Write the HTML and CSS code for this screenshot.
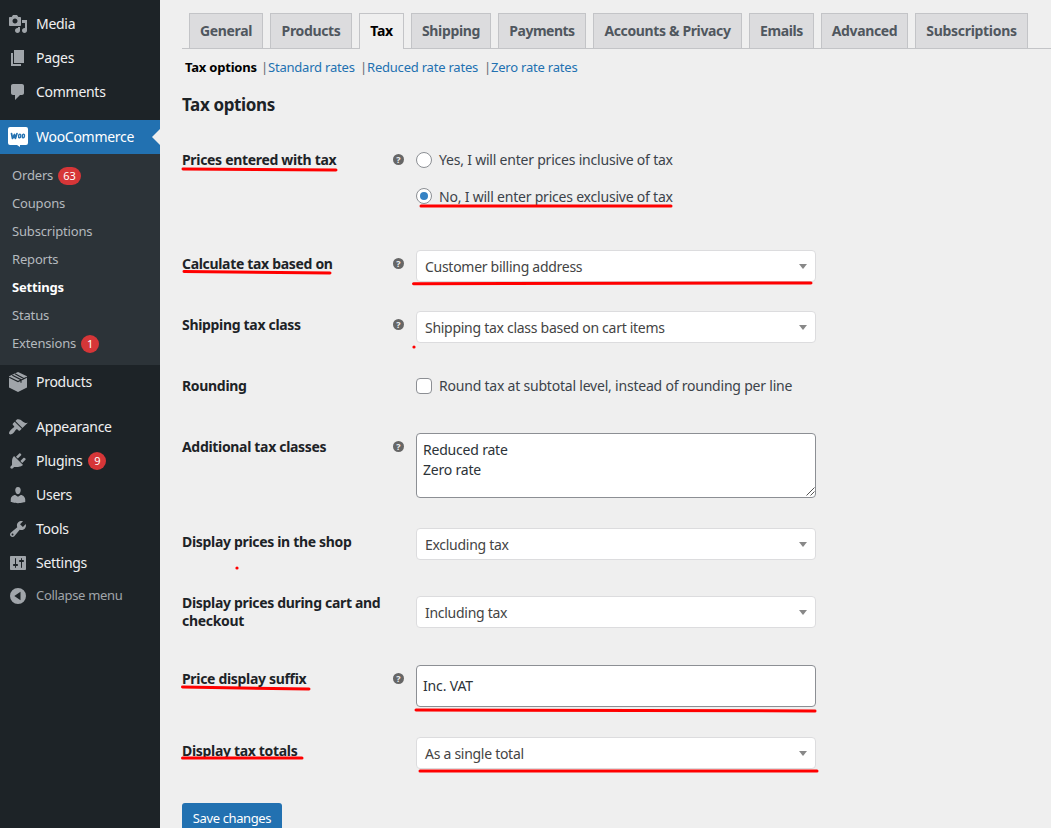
FILE: index.html
```html
<!DOCTYPE html>
<html lang="en">
<head>
<meta charset="utf-8">
<title>WooCommerce settings – Tax</title>
<link rel="stylesheet" href="styles.css">
</head>
<body>
<div class="layout">
<nav class="sidebar">
  <a class="item"><svg class="icon" viewBox="0 0 20 20"><path d="M13 11V4c0-.55-.45-1-1-1h-1.670L9 1H5L3.670 3H2c-.55 0-1 .45-1 1v7c0 .55.45 1 1 1h10c.55 0 1-.45 1-1zM7 4.500c1.380 0 2.500 1.120 2.500 2.500S8.380 9.500 7 9.500 4.500 8.380 4.500 7 5.620 4.500 7 4.500zM14 6h5v10.500c0 1.380-1.120 2.500-2.500 2.500S14 17.880 14 16.500s1.120-2.500 2.500-2.500c.17 0 .34.02.5.05V9h-3V6zm-4 8.050V13h2v3.500c0 1.380-1.120 2.500-2.500 2.500S7 17.880 7 16.500 8.120 14 9.500 14c.17 0 .34.02.5.05z"/></svg><span>Media</span></a>
  <a class="item"><svg class="icon" viewBox="0 0 20 20"><path d="M6 15V2h10v13H6zm-1 1h8v2H3V5h2v11z"/></svg><span>Pages</span></a>
  <a class="item"><svg class="icon" viewBox="0 0 20 20"><path d="M5 2h9c1.100 0 2 .9 2 2v7c0 1.100-.9 2-2 2h-2l-5 5v-5H5c-1.100 0-2-.9-2-2V4c0-1.100.9-2 2-2z"/></svg><span>Comments</span></a>
  <div class="separator"></div>
  <a class="item current"><svg class="icon" viewBox="0 0 20 20"><path fill="#fff" d="M2 0h16q2 0 2 2v14q0 2-2 2h-6v2l-3-2H2q-2 0-2-2V2q0-2 2-2z"/><path fill="none" stroke="#2271b1" stroke-width="1.700" stroke-linejoin="round" stroke-linecap="round" d="M3.500 6.500l1 5 2-4 .9 4L9 6.500"/><ellipse cx="11.700" cy="9" rx="1.100" ry="1.900" fill="none" stroke="#2271b1" stroke-width="1.400" transform="rotate(10 11.700 9)"/><ellipse cx="15.400" cy="9" rx="1.100" ry="1.900" fill="none" stroke="#2271b1" stroke-width="1.400" transform="rotate(10 15.400 9)"/></svg><span>WooCommerce</span></a>
  <div class="submenu">
    <a>Orders<b class="badge">63</b></a>
    <a>Coupons</a>
    <a>Subscriptions</a>
    <a>Reports</a>
    <a class="active">Settings</a>
    <a>Status</a>
    <a>Extensions<b class="badge">1</b></a>
  </div>
  <a class="item"><svg class="icon" viewBox="0 0 20 20"><path d="M10 0l9 4.300v11.200L10 20l-9-4.500V4.300z"/><path fill="none" stroke="#1d2327" stroke-width="1.100" d="M1.200 5.200L10 9.600l8.800-4.400M4.300 3.200l8.700 4.500v3M7 1.800l8.700 4.600"/></svg><span>Products</span></a>
  <div class="separator"></div>
  <a class="item"><svg class="icon" viewBox="0 0 20 20"><path d="M14.480 11.060L7.410 3.990l1.500-1.500c.5-.56 2.300-.47 3.510.32 1.210.8 1.430 1.280 2.910 2.100 1.180.64 2.450 1.260 4.450.85zm-.71.71L6.700 4.700 4.930 6.470c-.39.39-.39 1.020 0 1.410l1.060 1.060c.39.39.39 1.030 0 1.420-.6.6-1.430 1.110-2.210 1.690-.35.26-.7.53-1.010.84C1.430 14.230.4 16.080 1.400 17.070c.99 1 2.840-.03 4.180-1.360.31-.31.58-.66.85-1.020.57-.78 1.080-1.610 1.690-2.210.39-.39 1.020-.39 1.410 0l1.060 1.060c.39.39 1.020.39 1.410 0z"/></svg><span>Appearance</span></a>
  <a class="item"><svg class="icon" viewBox="0 0 20 20"><path d="M13.110 4.360L9.870 7.600 8 5.730l3.240-3.240c.35-.34 1.050-.2 1.560.32.52.51.66 1.210.31 1.550zm-8 1.770l.91-1.120 9.010 9.010-1.190.84c-.71.71-2.630 1.160-3.820 1.160H6.140L4.900 17.260c-.59.59-1.540.59-2.120 0-.59-.58-.59-1.530 0-2.120l1.240-1.240v-3.880c0-1.130.4-3.190 1.090-3.890zm7.260 3.970l3.240-3.240c.34-.35 1.040-.21 1.550.31.52.51.66 1.210.31 1.550l-3.240 3.250z"/></svg><span>Plugins</span><b class="badge">9</b></a>
  <a class="item"><svg class="icon" viewBox="0 0 20 20"><path d="M10 9.250c-2.270 0-2.730-3.440-2.730-3.440C7 4.020 7.820 2 9.970 2c2.160 0 2.980 2.020 2.710 3.810 0 0-.41 3.440-2.680 3.440zm0 2.570L12.720 10c2.390 0 4.520 2.330 4.520 4.530v2.490s-3.650 1.130-7.240 1.130c-3.650 0-7.240-1.130-7.240-1.130v-2.490c0-2.250 1.940-4.480 4.470-4.480z"/></svg><span>Users</span></a>
  <a class="item"><svg class="icon" viewBox="0 0 20 20"><path d="M16.680 9.770c-1.340 1.340-3.300 1.670-4.950.99l-5.410 6.520c-.99.99-2.590.99-3.580 0s-.99-2.590 0-3.570l6.520-5.420c-.68-1.650-.35-3.610.99-4.950 1.280-1.280 3.120-1.620 4.720-1.060l-2.890 2.890 2.820 2.820 2.860-2.870c.53 1.580.18 3.390-1.080 4.650zM3.810 16.210c.4.39 1.040.39 1.430 0 .4-.4.4-1.040 0-1.430-.39-.4-1.030-.4-1.430 0-.39.39-.39 1.030 0 1.430z"/></svg><span>Tools</span></a>
  <a class="item"><svg class="icon" viewBox="0 0 20 20"><path d="M18 16V4c0-.55-.45-1-1-1H3c-.55 0-1 .45-1 1v12c0 .55.45 1 1 1h14c.55 0 1-.45 1-1zM8 11h1c.55 0 1 .45 1 1s-.45 1-1 1H8v1.500c0 .28-.22.5-.5.5s-.5-.22-.5-.5V13H6c-.55 0-1-.45-1-1s.45-1 1-1h1V5.500c0-.28.22-.5.5-.5s.5.22.5.5V11zm5-2h-1c-.55 0-1-.45-1-1s.45-1 1-1h1V5.500c0-.28.22-.5.5-.5s.5.22.5.5V7h1c.55 0 1 .45 1 1s-.45 1-1 1h-1v5.500c0 .28-.22.5-.5.5s-.5-.22-.5-.5V9z"/></svg><span>Settings</span></a>
  <a class="item collapse"><svg class="icon" viewBox="0 0 20 20"><path fill-rule="evenodd" d="M10 2a8 8 0 1 1 0 16 8 8 0 0 1 0-16zM12.500 5.800L6.300 10l6.200 4.200z"/></svg><span>Collapse menu</span></a>
</nav>
<main class="content">
  <div class="tabs">
    <a class="tab general">General</a>
    <a class="tab products">Products</a>
    <a class="tab tax selected">Tax</a>
    <a class="tab shipping">Shipping</a>
    <a class="tab payments">Payments</a>
    <a class="tab accounts">Accounts &amp; Privacy</a>
    <a class="tab emails">Emails</a>
    <a class="tab advanced">Advanced</a>
    <a class="tab subscriptions">Subscriptions</a>
  </div>
  <div class="sections"><b>Tax options</b><i>|</i><a class="standard">Standard rates</a><i>|</i><a class="reduced">Reduced rate rates</a><i>|</i><a class="zero">Zero rate rates</a></div>
  <h2>Tax options</h2>
  <div class="row prices">
    <label class="name">Prices entered with tax</label><span class="help">?</span>
    <div class="field"><div class="choice"><span class="radio"></span>Yes, I will enter prices inclusive of tax</div><div class="choice second"><span class="radio on"></span>No, I will enter prices exclusive of tax</div></div>
  </div>
  <div class="row">
    <label class="name">Calculate tax based on</label><span class="help">?</span>
    <div class="field select">Customer billing address</div>
  </div>
  <div class="row">
    <label class="name">Shipping tax class</label><span class="help">?</span>
    <div class="field select">Shipping tax class based on cart items</div>
  </div>
  <div class="row">
    <label class="name">Rounding</label><span></span>
    <div class="field"><div class="choice"><span class="checkbox"></span>Round tax at subtotal level, instead of rounding per line</div></div>
  </div>
  <div class="row classes">
    <label class="name">Additional tax classes</label><span class="help">?</span>
    <div class="field area"><div>Reduced rate<br>Zero rate</div><svg class="grip" viewBox="0 0 9 9"><path d="M.5 8.500l8-8M4.500 8.500l4-4" stroke="#555" fill="none"/></svg></div>
  </div>
  <div class="row">
    <label class="name">Display prices in the shop</label><span></span>
    <div class="field select">Excluding tax</div>
  </div>
  <div class="row cart">
    <label class="name">Display prices during cart and checkout</label><span></span>
    <div class="field select">Including tax</div>
  </div>
  <div class="row suffix">
    <label class="name">Price display suffix</label><span class="help">?</span>
    <div class="field input">Inc. VAT</div>
  </div>
  <div class="row totals">
    <label class="name">Display tax totals</label><span></span>
    <div class="field select">As a single total</div>
  </div>
  <button class="save">Save changes</button>
</main>
</div>
<svg class="marks" viewBox="0 0 1051 828">
  <path d="M183 169L336 170M421 206L671 206M184 271.500L330 273M413.500 283.800L811 283M182.500 687L309 689M416 710L815 711M182.500 758L302 758M420 771L817 771"/>
  <circle cx="414" cy="347" r="1.600"/><circle cx="237" cy="568" r="1.600"/>
</svg>
</body>
</html>
```
FILE: styles.css
```css
* { box-sizing: border-box; }
body {
  margin: 0;
  height: 828px;
  overflow: hidden;
  background: #efefef;
  color: #3c434a;
  font: 14px/20px "Noto Sans", "Open Sans", sans-serif;
  letter-spacing: -0.28px;
}
.layout { display: flex; height: 828px; }

/* Admin menu */
.sidebar { width: 160px; flex: none; padding-top: 7px; background: #1d2327; color: #f0f0f1; }
.item { display: flex; align-items: center; height: 34px; padding-left: 8px; }
.icon { width: 20px; height: 20px; margin-right: 8px; flex: none; fill: #a0a5aa; }
.separator { height: 11px; }
.current { position: relative; background: #2271b1; color: #fff; }
.current::after {
  content: "";
  position: absolute;
  right: 0;
  top: 9px;
  border: 8px solid transparent;
  border-left: 0;
  border-right-color: #efefef;
}
.submenu { padding: 7px 0 8px; background: #2c3338; color: #b4b9be; font-size: 13px; letter-spacing: -0.17px; }
.submenu a { display: flex; align-items: center; height: 28px; padding-left: 12px; }
.submenu .active { color: #fff; font-weight: 700; }
.badge {
  min-width: 18px;
  height: 18px;
  margin-left: 6px;
  padding: 0 5px;
  border-radius: 9px;
  background: #d63638;
  color: #fff;
  font-size: 11px;
  font-weight: 400;
  line-height: 17px;
  letter-spacing: 0;
  text-align: center;
}
.submenu .badge { margin: 1px 0 0 5px; }
.collapse { height: 32px; color: #a0a5aa; font-size: 13px; letter-spacing: -0.32px; }
.collapse span { margin-top: -2px; }

/* Settings tabs */
.content { flex: 1; padding: 13px 0 0 22px; }
.tabs { display: flex; gap: 7px; height: 36px; padding-left: 7px; border-bottom: 1px solid #c3c4c7; }
.tab {
  flex: none;
  height: 35px;
  border: 1px solid #c3c4c7;
  border-bottom: 0;
  background: #dcdcde;
  color: #50575e;
  font-weight: 700;
  line-height: 34px;
  text-align: center;
  white-space: nowrap;
  letter-spacing: -0.36px;
}
.selected { height: 36px; background: #efefef; color: #000; }
.general { width: 74px; }
.products { width: 82px; }
.tax { width: 45px; }
.shipping { width: 80px; }
.payments { width: 88px; letter-spacing: -0.5px; }
.accounts { width: 149px; }
.emails { width: 65px; }
.advanced { width: 87px; }
.subscriptions { width: 113px; letter-spacing: -0.3px; }

.sections { display: flex; padding: 8px 0 0 3px; height: 29px; font-size: 13px; letter-spacing: -0.21px; white-space: nowrap; }
.sections b { width: 76px; color: #000; }
.sections i { width: 7px; font-style: normal; color: #646970; }
.sections a { color: #2271b1; }
.standard { width: 92px; }
.reduced { width: 117px; }
h2 { margin: 17px 0 16px; height: 20px; color: #1d2327; font-size: 17px; line-height: 20px; letter-spacing: -0.36px; }

/* Form rows */
.row { display: grid; grid-template-columns: 210px 24px 400px; align-items: start; height: 61px; padding-top: 15px; }
.name { padding-top: 5px; width: 205px; color: #1d2327; font-weight: 700; line-height: 18px; letter-spacing: -0.32px; }
.help {
  width: 11px;
  height: 11px;
  margin: 8px 0 0 1px;
  border-radius: 50%;
  background: #666;
  color: #efefef;
  font-size: 9px;
  font-weight: 700;
  line-height: 11px;
  letter-spacing: 0;
  text-align: center;
}
.prices { height: 104px; }
.classes { height: 95px; }
.cart { height: 76px; }
.cart .select { margin-top: 7px; }
.suffix { height: 72px; }
.totals { height: 81px; }
.choice { display: flex; align-items: center; height: 28px; white-space: nowrap; letter-spacing: -0.21px; }
.second { margin-top: 9px; }
.radio, .checkbox { width: 16px; height: 16px; margin-right: 7px; border: 1px solid #8c8f94; background: #fff; }
.checkbox { border-radius: 4px; margin-top: -1px; }
.radio { border-radius: 50%; padding: 3px; }
.on { margin-top: -2px; }
.on::before { content: ""; display: block; width: 8px; height: 8px; border-radius: 50%; background: #3582c4; }
.select, .input, .area { border: 1px solid #dcdcde; border-radius: 4px; background: #fff; color: #444; }
.select { display: flex; align-items: center; justify-content: space-between; height: 32px; padding: 1px 8px 0; }
.select::after { content: ""; border: 4px solid transparent; border-top: 5px solid #888; border-bottom: 0; }
.input { height: 42px; padding: 0 6px; border-color: #8c8f94; color: #2c3338; line-height: 40px; letter-spacing: -0.15px; }
.area { display: flex; justify-content: space-between; align-items: flex-end; height: 65px; border-color: #8c8f94; color: #2c3338; letter-spacing: -0.2px; }
.area div { align-self: flex-start; padding: 6px; }
.grip { width: 9px; height: 9px; margin: 0 0 1px 0; }
.save {
  display: block;
  width: 100px;
  height: 32px;
  padding: 0;
  border: 0;
  border-radius: 3px;
  background: #2271b1;
  color: #fff;
  font: 13px/28px "Noto Sans", "Open Sans", sans-serif;
  padding-bottom: 2px;
  letter-spacing: -0.38px;
}

/* Hand-drawn red annotations lie over the form */
.marks { position: absolute; left: 0; top: 0; width: 1051px; height: 828px; pointer-events: none; fill: red; }
.marks path { fill: none; stroke: red; stroke-width: 3; stroke-linecap: round; }
```
